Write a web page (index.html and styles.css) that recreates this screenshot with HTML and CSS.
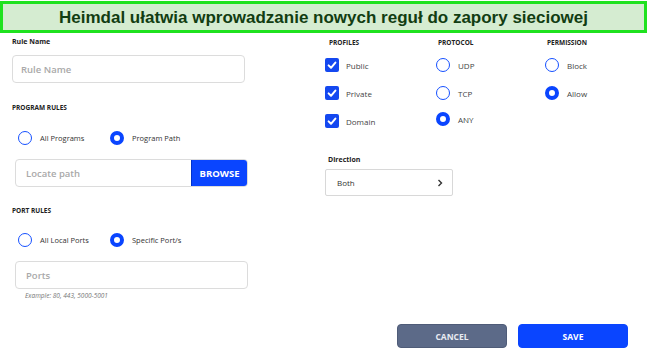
FILE: index.html
```html
<!DOCTYPE html>
<html lang="pl">
  <head>
    <meta charset="UTF-8" />
    <title>Heimdal firewall rule</title>
    <link rel="stylesheet" href="styles.css">
  </head>
  <body>
    <div class="banner">Heimdal ułatwia wprowadzanie nowych reguł do zapory sieciowej</div>

    <div class="form">
      <div class="left-col">
        <div class="label label-first">Rule Name</div>
        <div class="field field-name"><span class="placeholder">Rule Name</span></div>

        <div class="section-title">PROGRAM RULES</div>
        <div class="radio-row">
          <span class="option option-wide"><span class="radio"></span>All Programs</span>
          <span class="option"><span class="radio checked"></span>Program Path</span>
        </div>
        <div class="field field-browse">
          <span class="placeholder">Locate path</span>
          <span class="browse">BROWSE</span>
        </div>

        <div class="section-title">PORT RULES</div>
        <div class="radio-row">
          <span class="option option-wide"><span class="radio"></span>All Local Ports</span>
          <span class="option"><span class="radio checked"></span>Specific Port/s</span>
        </div>
        <div class="field"><span class="placeholder">Ports</span></div>
        <div class="hint">Example: 80, 443, 5000-5001</div>
      </div>

      <div class="right-col">
        <div class="groups">
          <div class="group">
            <div class="group-title">PROFILES</div>
            <div class="option-line">
              <span class="checkbox"><svg viewBox="0 0 14 14" width="14" height="14"><path d="M3.6 7.4 L6 9.8 L10.4 4.6" fill="none" stroke="#fff" stroke-width="2" stroke-linecap="round" stroke-linejoin="round"/></svg></span>Public
            </div>
            <div class="option-line">
              <span class="checkbox"><svg viewBox="0 0 14 14" width="14" height="14"><path d="M3.6 7.4 L6 9.8 L10.4 4.6" fill="none" stroke="#fff" stroke-width="2" stroke-linecap="round" stroke-linejoin="round"/></svg></span>Private
            </div>
            <div class="option-line">
              <span class="checkbox"><svg viewBox="0 0 14 14" width="14" height="14"><path d="M3.6 7.4 L6 9.8 L10.4 4.6" fill="none" stroke="#fff" stroke-width="2" stroke-linecap="round" stroke-linejoin="round"/></svg></span>Domain
            </div>
          </div>
          <div class="group">
            <div class="group-title">PROTOCOL</div>
            <div class="option-line"><span class="radio"></span>UDP</div>
            <div class="option-line"><span class="radio"></span>TCP</div>
            <div class="option-line option-short"><span class="radio checked"></span>ANY</div>
          </div>
          <div class="group">
            <div class="group-title">PERMISSION</div>
            <div class="option-line"><span class="radio"></span>Block</div>
            <div class="option-line"><span class="radio checked"></span>Allow</div>
          </div>
        </div>

        <div class="label direction-label">Direction</div>
        <div class="select">
          <span>Both</span>
          <svg class="chevron" viewBox="0 0 8 10" width="8" height="10"><path d="M2.5 2 L5.5 5 L2.5 8" fill="none" stroke="#333" stroke-width="1.4"/></svg>
        </div>
      </div>
    </div>

    <div class="actions">
      <button class="btn btn-cancel">CANCEL</button>
      <button class="btn btn-save">SAVE</button>
    </div>
  </body>
</html>
```

FILE: styles.css
```css
body {
  margin: 0;
  width: 650px;
  height: 355px;
  background: #fff;
  font-family: "Open Sans", "Noto Sans", sans-serif;
  color: #333;
  overflow: hidden;
}

.banner {
  height: 26px;
  margin: 1px 3px 0 0;
  border: 3px solid #1fe21f;
  background: #d5ecd1;
  color: #123d12;
  font-family: "Liberation Sans", Arial, sans-serif;
  font-weight: bold;
  font-size: 17px;
  line-height: 27px;
  text-align: center;
}

.form {
  display: flex;
  padding-left: 12px;
}

.left-col {
  flex: none;
  width: 236px;
}

.label {
  font-size: 7px;
  font-weight: 700;
  line-height: 10px;
  color: #222;
}

.label-first {
  margin-top: 4px;
}

.field {
  display: flex;
  align-items: center;
  height: 26px;
  margin-left: 3px;
  border: 1px solid #dcdcdc;
  border-radius: 4px;
  padding-left: 10px;
}

.field-name {
  margin: 8px 3px 0 0;
  padding-left: 8px;
}

.placeholder {
  font-size: 9.5px;
  font-weight: 600;
  color: #a9a9a9;
}

.section-title {
  margin-top: 20px;
  font-size: 6.5px;
  font-weight: 700;
  line-height: 10px;
  color: #222;
}

.radio-row + .field + .section-title {
  margin-top: 19px;
}

.section-title + .radio-row {
  margin-top: 17px;
}

.radio-row {
  display: flex;
  align-items: center;
  height: 15px;
  margin-left: 6px;
  font-size: 7.5px;
  color: #333;
}

.radio-row + .field + .section-title + .radio-row {
  margin-top: 16px;
}

.option {
  display: flex;
  align-items: center;
}

.option-wide {
  width: 92px;
}

.radio {
  display: inline-block;
  box-sizing: border-box;
  width: 14px;
  height: 14px;
  margin-right: 8px;
  border: 1.6px solid #1550ff;
  border-radius: 50%;
  background: #fff;
}

.radio.checked {
  border-width: 4px;
  border-color: #0a45ff;
}

.radio-row + .field {
  margin-top: 14px;
}

.field-browse {
  padding-right: 0;
  overflow: hidden;
}

.field-browse .placeholder {
  flex: 1;
}

.browse {
  display: flex;
  align-items: center;
  justify-content: center;
  width: 57px;
  height: 28px;
  margin-right: -1px;
  background: #0a45ff;
  border: 1px solid #0033cc;
  box-sizing: border-box;
  color: #fff;
  font-size: 9.5px;
  font-weight: 700;
}

.hint {
  margin: 2px 0 0 13px;
  font-size: 6.5px;
  font-style: italic;
  color: #777;
}

.right-col {
  margin-left: 77px;
}

.groups {
  display: flex;
}

.group {
  width: 109px;
}

.group-title {
  margin: 5px 0 0 4px;
  font-size: 6.5px;
  font-weight: 700;
  line-height: 10px;
  color: #222;
}

.option-line {
  display: flex;
  align-items: center;
  height: 28px;
  font-size: 8px;
  color: #444;
}

.group-title + .option-line {
  margin-top: 3px;
}

.group:not(:first-child) .option-line {
  padding-left: 2px;
}

.option-short {
  height: 24px;
}

.checkbox {
  display: inline-block;
  width: 14px;
  height: 14px;
  margin-right: 7px;
  border-radius: 2px;
  background: #1448f0;
}

.checkbox svg {
  display: block;
}

.direction-label {
  margin: 20px 0 0 3px;
}

.select {
  display: flex;
  align-items: center;
  justify-content: space-between;
  width: 107px;
  height: 25px;
  margin-top: 4px;
  padding: 0 8px 0 11px;
  border: 1px solid #d8d8d8;
  border-radius: 2px;
  font-size: 8px;
  color: #333;
}

.actions {
  display: flex;
  gap: 11px;
  margin: 24px 0 0 397px;
}

.btn {
  width: 110px;
  height: 24px;
  border-radius: 4px;
  font-family: "Open Sans", "Noto Sans", sans-serif;
  font-size: 8.5px;
  font-weight: 700;
  cursor: pointer;
}

.btn-cancel {
  background: #5c6a88;
  border: 1px solid #4f5c78;
  color: #e8ebf2;
}

.btn-save {
  background: #0a45ff;
  border: 1px solid #0a45ff;
  color: #fff;
}
```
